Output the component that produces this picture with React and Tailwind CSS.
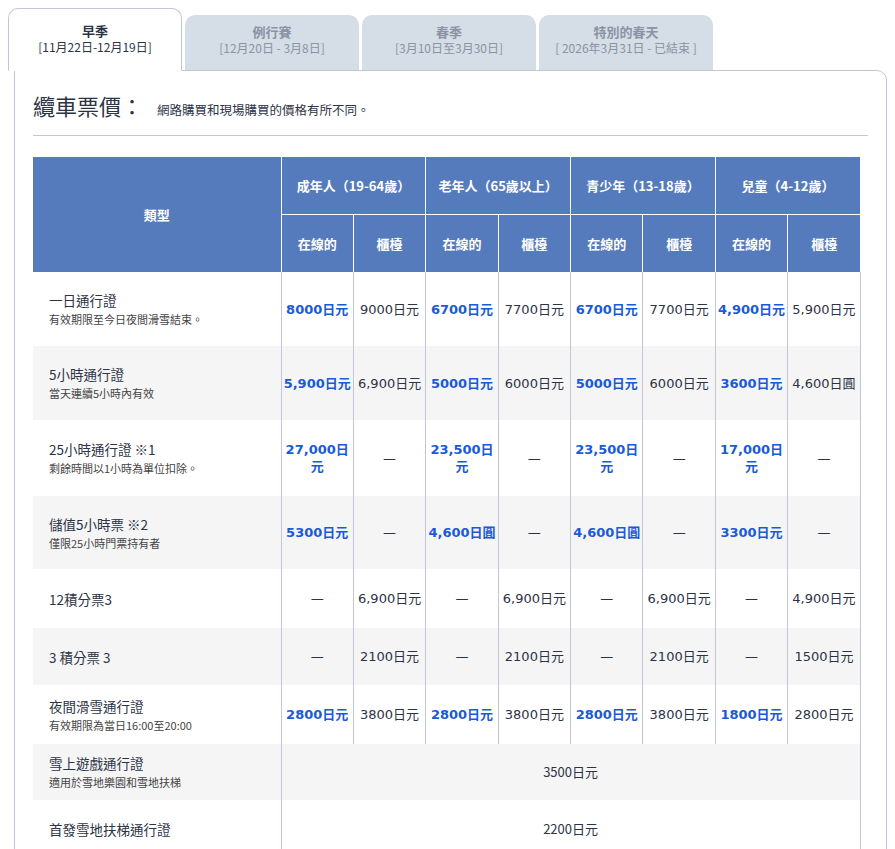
const B = "bold";
const rows = [
  { t: "一日通行證", s: "有效期限至今日夜間滑雪結束。", h: 74, v: [["8000日元",B],["9000日元"],["6700日元",B],["7700日元"],["6700日元",B],["7700日元"],["4,900日元",B],["5,900日元"]] },
  { t: "5小時通行證", s: "當天連續5小時內有效", h: 74, g: 1, v: [["5,900日元",B],["6,900日元"],["5000日元",B],["6000日元"],["5000日元",B],["6000日元"],["3600日元",B],["4,600日圓"]] },
  { t: "25小時通行證 ※1", s: "剩餘時間以1小時為單位扣除。", h: 76, v: [["27,000日元",B],["—"],["23,500日元",B],["—"],["23,500日元",B],["—"],["17,000日元",B],["—"]] },
  { t: "儲值5小時票 ※2", s: "僅限25小時門票持有者", h: 73, g: 1, v: [["5300日元",B],["—"],["4,600日圓",B],["—"],["4,600日圓",B],["—"],["3300日元",B],["—"]] },
  { t: "12積分票3", h: 59, v: [["—"],["6,900日元"],["—"],["6,900日元"],["—"],["6,900日元"],["—"],["4,900日元"]] },
  { t: "3 積分票 3", h: 57, g: 1, v: [["—"],["2100日元"],["—"],["2100日元"],["—"],["2100日元"],["—"],["1500日元"]] },
  { t: "夜間滑雪通行證", s: "有效期限為當日16:00至20:00", h: 59, v: [["2800日元",B],["3800日元"],["2800日元",B],["3800日元"],["2800日元",B],["3800日元"],["1800日元",B],["2800日元"]] },
  { t: "雪上遊戲通行證", s: "適用於雪地樂園和雪地扶梯", h: 56, g: 1, span: "3500日元" },
  { t: "首發雪地扶梯通行證", h: 58, span: "2200日元" },
];
const tabs = [["例行賽","[12月20日 - 3月8日]"],["春季","[3月10日至3月30日]"],["特別的春天","[ 2026年3月31日 - 已結束 ]"]];
const num = { fontFamily: '"DejaVu Sans", "Noto Sans CJK TC", sans-serif' };
export default function App() {
  return (
    <div className="w-[895px] h-[849px] overflow-hidden bg-white text-[#2c3345]" style={{ fontFamily: '"Noto Sans CJK TC", "Noto Sans", sans-serif' }}>
      <div className="flex items-end gap-[3px] pl-[8px] pt-[8px] relative z-10">
        <div className="w-[174px] h-[63px] bg-white border border-[#c3c6d4] border-b-white rounded-t-[10px] flex flex-col items-center pt-[14px] leading-[16px]">
          <div className="text-[13px] font-bold">早季</div>
          <div className="text-[12px]">[11月22日-12月19日]</div>
        </div>
        {tabs.map(([a, b]) => (
          <div key={a} className="w-[174px] h-[55px] bg-[#d5dde6] rounded-t-[10px] flex flex-col items-center pt-[9px] leading-[16px] text-[#8a93a4] mb-[1px]">
            <div className="text-[13px] font-bold">{a}</div>
            <div className="text-[12px]">{b}</div>
          </div>
        ))}
      </div>
      <div className="ml-[14px] w-[873px] border border-[#c3c6d4] rounded-tr-[10px] mt-[-1px] px-[18px] h-[800px]">
        <div className="flex items-baseline pt-[18px] pb-[13px] border-b border-[#c3c6d4]">
          <span className="text-[22px]">纜車票價：</span>
          <span className="text-[12.5px] ml-[14px]">網路購買和現場購買的價格有所不同。</span>
        </div>
        <table className="mt-[21px] w-[827px] table-fixed border-collapse text-[12px]">
          <colgroup>
            <col className="w-[248px]" />
            {Array.from({ length: 8 }).map((_, i) => <col key={i} className="w-[72.4px]" />)}
          </colgroup>
          <thead className="bg-[#567bbd] text-white font-bold text-[13px]">
            <tr className="h-[57px]">
              <th rowSpan={2} className="border-r border-white">類型</th>
              {["成年人（19-64歲）","老年人（65歲以上）","青少年（13-18歲）","兒童（4-12歲）"].map(x => (
                <th key={x} colSpan={2} className="border-r border-b border-white last:border-r-0 whitespace-nowrap">{x}</th>
              ))}
            </tr>
            <tr className="h-[58px]">
              {Array.from({ length: 8 }).map((_, i) => (
                <th key={i} className="border-r border-white last:border-r-0">{i % 2 ? "櫃檯" : "在線的"}</th>
              ))}
            </tr>
          </thead>
          <tbody>
            {rows.map((r) => (
              <tr key={r.t} className={r.g ? "bg-[#f5f5f5]" : "bg-white"} style={{ height: r.h }}>
                <td className="pl-[16px] border-r border-[#c3c6d4] align-middle">
                  <div className="text-[13.5px] leading-[20px]">{r.t}</div>
                  {r.s && <div className="text-[11px] leading-[18px] text-[#444]">{r.s}</div>}
                </td>
                {r.span ? (
                  <td colSpan={8} className="text-center text-[13px] border-r border-[#c3c6d4]">{r.span}</td>
                ) : r.v.map(([x, b], i) => (
                  <td key={i} style={num} className={"text-center leading-[17px] border-r border-[#c3c6d4] px-0 " + (b ? "text-[#1a5ad7] font-bold text-[13px]" : "text-[13px]")}>{x}</td>
                ))}
              </tr>
            ))}
          </tbody>
        </table>
      </div>
    </div>
  );
}
